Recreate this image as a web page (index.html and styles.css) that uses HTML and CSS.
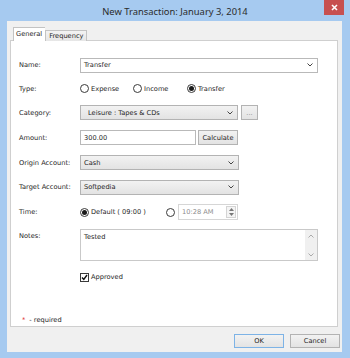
FILE: index.html
```html
<!DOCTYPE html>
<html lang="en">
<head>
    <meta charset="UTF-8">
    <title>New Transaction: January 3, 2014</title>
    <link rel="stylesheet" href="styles.css">
</head>
<body>
    <div class="window">
        <div class="titlebar">
            <span></span>
            <span class="title">New Transaction: January 3, 2014</span>
            <div class="close">
                <svg width="7" height="7" viewBox="0 0 7 7"><path d="M1 1L6 6M6 1L1 6" stroke="#fff" stroke-width="1.6"/></svg>
            </div>
        </div>

        <div class="client">
            <div class="tabs">
                <div class="tab active">General</div>
                <div class="tab">Frequency</div>
            </div>

            <div class="panel">
                <div class="form">
                    <div class="label">Name:</div>
                    <div class="field combo white full">
                        <span>Transfer</span>
                        <svg class="chev" width="6" height="4" viewBox="0 0 6 4"><path d="M0.5 0.5L3 3L5.5 0.5" fill="none" stroke="#444" stroke-width="1"/></svg>
                    </div>

                    <div class="label">Type:</div>
                    <div class="radios">
                        <div class="radio w53"><span class="dot"></span>Expense</div>
                        <div class="radio w54"><span class="dot"></span>Income</div>
                        <div class="radio"><span class="dot on"></span>Transfer</div>
                    </div>

                    <div class="label">Category:</div>
                    <div class="inline">
                        <div class="field combo grey cat">
                            <span>Leisure : Tapes &amp; CDs</span>
                            <svg class="chev" width="6" height="4" viewBox="0 0 6 4"><path d="M0.5 0.5L3 3L5.5 0.5" fill="none" stroke="#444" stroke-width="1"/></svg>
                        </div>
                        <div class="btn dots">...</div>
                    </div>

                    <div class="label">Amount:</div>
                    <div class="inline gap2">
                        <div class="field white amount">300.00</div>
                        <div class="btn calc">Calculate</div>
                    </div>

                    <div class="label">Origin Account:</div>
                    <div class="field combo grey acct">
                        <span>Cash</span>
                        <svg class="chev" width="6" height="4" viewBox="0 0 6 4"><path d="M0.5 0.5L3 3L5.5 0.5" fill="none" stroke="#444" stroke-width="1"/></svg>
                    </div>

                    <div class="label">Target Account:</div>
                    <div class="field combo grey acct">
                        <span>Softpedia</span>
                        <svg class="chev" width="6" height="4" viewBox="0 0 6 4"><path d="M0.5 0.5L3 3L5.5 0.5" fill="none" stroke="#444" stroke-width="1"/></svg>
                    </div>

                    <div class="label">Time:</div>
                    <div class="radios">
                        <div class="radio w86"><span class="dot on"></span>Default ( 09:00 )</div>
                        <div class="radio"><span class="dot"></span></div>
                        <div class="field time">
                            <span>10:28 AM</span>
                            <div class="spin">
                                <svg width="5" height="3" viewBox="0 0 5 3"><path d="M0 3L2.5 0L5 3Z" fill="#777"/></svg>
                                <svg width="5" height="3" viewBox="0 0 5 3"><path d="M0 0L2.5 3L5 0Z" fill="#777"/></svg>
                            </div>
                        </div>
                    </div>

                    <div class="label top">Notes:</div>
                    <div class="field notes">
                        <span class="text">Tested</span>
                        <div class="scroll">
                            <svg width="6" height="4" viewBox="0 0 6 4"><path d="M0.5 3.5L3 1L5.5 3.5" fill="none" stroke="#aaa" stroke-width="1"/></svg>
                            <svg width="6" height="4" viewBox="0 0 6 4"><path d="M0.5 0.5L3 3L5.5 0.5" fill="none" stroke="#aaa" stroke-width="1"/></svg>
                        </div>
                    </div>

                    <div></div>
                    <div class="check">
                        <span class="box">
                            <svg width="7" height="7" viewBox="0 0 7 7"><path d="M1 3.5L2.8 5.5L6 1" fill="none" stroke="#111" stroke-width="1.4"/></svg>
                        </span>Approved
                    </div>
                </div>

                <div class="required"><span class="star">*</span>- required</div>
            </div>

            <div class="buttons">
                <div class="btn big default">OK</div>
                <div class="btn big">Cancel</div>
            </div>
        </div>
    </div>
</body>
</html>
```

FILE: styles.css
```css
body {
    margin: 0;
    background-color: #a6caf0;
    font-family: 'DejaVu Sans', sans-serif;
    font-size: 6.65px;
    color: #1e1e1e;
}

.window {
    width: 350px;
    height: 358px;
    display: flex;
    flex-direction: column;
    background-color: #a6caf0;
}

.titlebar {
    height: 21px;
    display: grid;
    grid-template-columns: 1fr auto 1fr;
    align-items: start;
}

.title {
    font-family: 'Noto Sans', sans-serif;
    font-size: 9.4px;
    color: #2b2b2b;
    line-height: 24px;
}

.close {
    justify-self: end;
    margin-right: 6px;
    width: 20px;
    height: 15px;
    background-color: #c75050;
    display: flex;
    align-items: center;
    justify-content: center;
}

.client {
    margin: 0 8px 6px 7px;
    flex: 1;
    background-color: #f0f0f0;
    display: flex;
    flex-direction: column;
}

.tabs {
    display: flex;
    align-items: flex-end;
    margin: 6px 0 -1px 6px;
    position: relative;
    z-index: 1;
}

.tab {
    height: 10px;
    line-height: 10px;
    padding: 0 3px;
    border: 1px solid #c3c3c3;
    border-bottom: none;
    background: linear-gradient(#f3f3f3, #e6e6e6);
}

.tab.active {
    height: 13px;
    line-height: 12px;
    padding: 0 3px 0 2px;
    background: #fff;
    border-right: none;
}

.panel {
    margin: 0 4px 0 3px;
    height: 287px;
    box-sizing: border-box;
    background-color: #fff;
    border: 1px solid #cfcfcf;
    display: flex;
    flex-direction: column;
}

.form {
    display: grid;
    grid-template-columns: 61px 238px;
    grid-template-rows: 24px 23px 25px 25px 25px 24px 26px 40px 24px;
    align-items: center;
    padding: 12px 0 0 8px;
}

.label.top {
    align-self: start;
    margin-top: 7px;
}

.field {
    height: 15px;
    box-sizing: border-box;
    display: flex;
    align-items: center;
    justify-content: space-between;
    padding: 0 4px 0 3px;
}

.white {
    background: #fff;
    border: 1px solid #b9b9b9;
}

.grey {
    background: linear-gradient(#f2f2f2, #e3e3e3);
    border: 1px solid #b3b3b3;
}

.full { width: 238px; }
.cat { width: 158px; padding-left: 7px; }
.acct { width: 159px; }
.amount { width: 116px; }

.inline {
    display: flex;
    align-items: center;
    gap: 3px;
}

.inline.gap2 { gap: 2px; }

.btn {
    height: 15px;
    box-sizing: border-box;
    border: 1px solid #b3b3b3;
    background: linear-gradient(#f2f2f2, #e3e3e3);
    display: flex;
    align-items: center;
    justify-content: center;
}

.dots { width: 17px; color: #888; }
.calc { width: 40px; }

.radios {
    display: flex;
    align-items: center;
}

.radio {
    display: flex;
    align-items: center;
    gap: 2px;
}

.w53 { width: 53px; }
.w54 { width: 54px; }
.w86 { width: 86px; }

.dot {
    width: 9px;
    height: 9px;
    box-sizing: border-box;
    border: 1px solid #3a3a3a;
    border-radius: 50%;
    background: #fff;
    display: flex;
    align-items: center;
    justify-content: center;
}

.dot.on::after {
    content: '';
    width: 5px;
    height: 5px;
    border-radius: 50%;
    background: #1a1a1a;
}

.time {
    width: 60px;
    height: 16px;
    margin-left: 3px;
    border: 1px solid #d6d6d6;
    background: #fff;
    color: #8c8c8c;
    padding-right: 1px;
}

.spin {
    width: 10px;
    height: 12px;
    box-sizing: border-box;
    border: 1px solid #d4d4d4;
    background: #f4f4f4;
    display: flex;
    flex-direction: column;
    align-items: center;
    justify-content: space-around;
}

.notes {
    align-self: start;
    margin-top: 4px;
    width: 238px;
    height: 32px;
    align-items: stretch;
    border: 1px solid #c9c9c9;
    background: #fff;
    padding: 0;
}

.notes .text {
    padding: 3px 0 0 3px;
}

.scroll {
    width: 12px;
    background: #f0f0f0;
    display: flex;
    flex-direction: column;
    align-items: center;
    justify-content: space-between;
    padding: 4px 0 3px;
}

.check {
    display: flex;
    align-items: center;
    gap: 2px;
}

.box {
    width: 9px;
    height: 9px;
    box-sizing: border-box;
    border: 1px solid #3a3a3a;
    background: #fff;
    display: flex;
    align-items: center;
    justify-content: center;
}

.required {
    margin-top: auto;
    padding: 0 0 1px 11px;
    display: flex;
    align-items: center;
    gap: 4px;
    line-height: 9px;
}

.star {
    color: #e03030;
}

.buttons {
    display: flex;
    justify-content: flex-end;
    gap: 6px;
    margin-top: 7px;
    padding-right: 2px;
}

.btn.big {
    width: 50px;
    height: 14px;
}

.btn.default {
    border-color: #7db3e6;
}
```
